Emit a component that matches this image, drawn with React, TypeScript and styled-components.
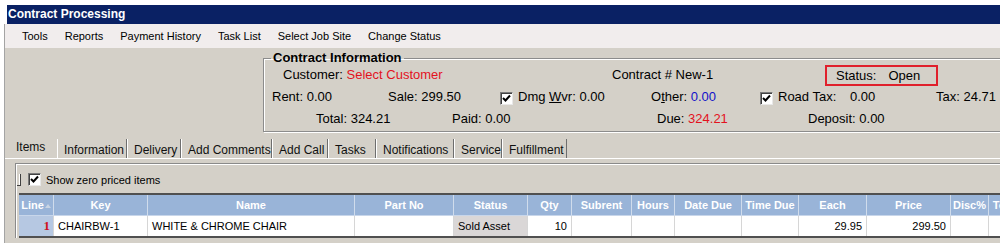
import React from "react";
import styled, { createGlobalStyle } from "styled-components";

const GlobalStyle = createGlobalStyle`
  html, body {
    margin: 0;
    padding: 0;
    background: #ffffff;
  }
  body {
    font-family: "Liberation Sans", Arial, sans-serif;
    color: #000;
  }
`;

const menuItems = [
  "Tools",
  "Reports",
  "Payment History",
  "Task List",
  "Select Job Site",
  "Change Status",
];

const tabs = [
  { name: "Items", w: 47 },
  { name: "Information", w: 70 },
  { name: "Delivery", w: 54 },
  { name: "Add Comments", w: 91 },
  { name: "Add Call", w: 56 },
  { name: "Tasks", w: 48 },
  { name: "Notifications", w: 78 },
  { name: "Service", w: 48 },
  { name: "Fulfillment", w: 65 },
];

interface Column {
  name: string;
  w: number;
}

const columns: Column[] = [
  { name: "Line", w: 35 },
  { name: "Key", w: 94 },
  { name: "Name", w: 207 },
  { name: "Part No", w: 99 },
  { name: "Status", w: 74 },
  { name: "Qty", w: 44 },
  { name: "Subrent", w: 60 },
  { name: "Hours", w: 43 },
  { name: "Date Due", w: 67 },
  { name: "Time Due", w: 57 },
  { name: "Each", w: 68 },
  { name: "Price", w: 84 },
  { name: "Disc%", w: 38 },
  { name: "Total", w: 34 },
];

const gridTemplate = columns.map((c) => `${c.w}px`).join(" ");

function CheckBox() {
  return (
    <CheckBoxBox>
      <svg width="9" height="9" viewBox="0 0 9 9">
        <path d="M1 4 L3.5 6.5 L8 1.5" stroke="#000" strokeWidth="2" fill="none" />
      </svg>
    </CheckBoxBox>
  );
}

export default function App() {
  return (
    <Page>
      <GlobalStyle />
      <TitleBar>Contract Processing</TitleBar>
      <Frame>
        <MenuBar>
          {menuItems.map((item) => (
            <MenuItem key={item}>{item}</MenuItem>
          ))}
        </MenuBar>

        <HeaderArea>
          <GroupBox>
            <Legend>Contract Information</Legend>
            <InfoRow $pad={19}>
              <Field $w={329}>
                Customer: <Red>Select Customer</Red>
              </Field>
              <Field $w={213}>Contract # New-1</Field>
              <StatusBox>
                <span>Status:</span>
                <span>Open</span>
              </StatusBox>
            </InfoRow>
            <InfoRow $pad={8}>
              <Field $w={116}>Rent: 0.00</Field>
              <Field $w={112}>Sale: 299.50</Field>
              <Field $w={151}>
                <CheckBox />
                Dmg <u>W</u>vr: 0.00
              </Field>
              <Field $w={109}>
                O<u>t</u>her: <Blue>0.00</Blue>
              </Field>
              <Field $w={90}>
                <CheckBox />
                Road Tax:
              </Field>
              <Field $w={86}>0.00</Field>
              <Field $w={70}>Tax: 24.71</Field>
            </InfoRow>
            <InfoRow $pad={52}>
              <Field $w={136}>Total: 324.21</Field>
              <Field $w={205}>Paid: 0.00</Field>
              <Field $w={151}>
                Due: <Red>324.21</Red>
              </Field>
              <Field $w={100}>Deposit: 0.00</Field>
            </InfoRow>
          </GroupBox>
        </HeaderArea>

        <TabStrip>
          {tabs.map((t, i) => (
            <Tab key={t.name} $w={t.w} $active={i === 0}>
              {t.name}
            </Tab>
          ))}
        </TabStrip>

        <TabPage>
          <ItemsPanel>
            <OptionsRow>
              <Grip />
              <CheckBox />
              <span>Show zero priced items</span>
            </OptionsRow>
            <GridWrap>
              <GridRow>
                {columns.map((c) => (
                  <HeadCell key={c.name}>
                    {c.name}
                    {c.name === "Line" && <SortArrow />}
                  </HeadCell>
                ))}
              </GridRow>
              <GridRow>
                <LineCell>1</LineCell>
                <Cell>CHAIRBW-1</Cell>
                <Cell>WHITE &amp; CHROME CHAIR</Cell>
                <Cell />
                <Cell $shade>Sold Asset</Cell>
                <Cell $right>10</Cell>
                <Cell />
                <Cell />
                <Cell />
                <Cell />
                <Cell $right>29.95</Cell>
                <Cell $right>299.50</Cell>
                <Cell />
                <Cell />
              </GridRow>
            </GridWrap>
          </ItemsPanel>
        </TabPage>
      </Frame>
    </Page>
  );
}

const Page = styled.div`
  padding: 5px 0 0 4px;
  width: 997px;
  height: 238px;
  overflow: hidden;
`;

const TitleBar = styled.div`
  margin-left: 3px;
  width: 993px;
  height: 19px;
  background: #0a2164;
  color: #ffffff;
  font-weight: bold;
  font-size: 12px;
  line-height: 19px;
  padding-left: 1px;
  box-sizing: border-box;
  white-space: nowrap;
`;

const Frame = styled.div`
  width: 996px;
  height: 219px;
  border-left: 1px solid #a4a4a4;
  box-sizing: border-box;
  display: flex;
  flex-direction: column;
  background: #d4d0c8;
  overflow: hidden;
`;

const MenuBar = styled.div`
  height: 24px;
  flex-shrink: 0;
  background: #f1eded;
  display: flex;
  align-items: center;
  gap: 17px;
  padding-left: 17px;
  font-size: 11px;
`;

const MenuItem = styled.span`
  white-space: nowrap;
  cursor: default;
`;

const HeaderArea = styled.div`
  height: 84px;
  flex-shrink: 0;
  padding: 4px 0 0 258px;
  box-sizing: border-box;
`;

const GroupBox = styled.fieldset`
  margin: 0;
  padding: 0;
  width: 737px;
  height: 80px;
  box-sizing: border-box;
  border: 1px solid #8c8c8c;
  box-shadow: inset 1px 1px 0 #ffffff, 1px 1px 0 #ffffff;
  font-size: 13px;
`;

const Legend = styled.legend`
  margin-left: 7px;
  padding: 0 2px;
  font-weight: bold;
  font-size: 13px;
  line-height: 12px;
`;

const InfoRow = styled.div<{ $pad: number }>`
  display: flex;
  align-items: center;
  height: 22px;
  padding-left: ${({ $pad }) => $pad}px;
`;

const Field = styled.div<{ $w: number }>`
  width: ${({ $w }) => $w}px;
  flex-shrink: 0;
  white-space: nowrap;
  line-height: 16px;
`;

const Red = styled.span`
  color: #e3121e;
`;

const Blue = styled.span`
  color: #1212c8;
`;

const StatusBox = styled.div`
  width: 113px;
  height: 21px;
  box-sizing: border-box;
  border: 2px solid #e0202c;
  display: flex;
  align-items: center;
  gap: 12px;
  padding-left: 9px;
`;

const CheckBoxBox = styled.span`
  width: 13px;
  height: 13px;
  box-sizing: border-box;
  background: #ffffff;
  border-top: 1px solid #7a7a7a;
  border-left: 1px solid #7a7a7a;
  border-right: 1px solid #e8e8e8;
  border-bottom: 1px solid #e8e8e8;
  box-shadow: inset 1px 1px 0 #404040;
  display: inline-flex;
  align-items: center;
  justify-content: center;
  vertical-align: -2px;
  margin-right: 5px;
  flex-shrink: 0;
`;

const TabStrip = styled.div`
  height: 26px;
  flex-shrink: 0;
  display: flex;
  align-items: flex-end;
  padding-left: 5px;
  font-size: 12px;
`;

const Tab = styled.div<{ $w: number; $active: boolean }>`
  width: ${({ $w }) => $w}px;
  box-sizing: border-box;
  white-space: nowrap;
  height: ${({ $active }) => ($active ? 24 : 19)}px;
  padding-left: ${({ $active }) => ($active ? 5 : 6)}px;
  padding-top: ${({ $active }) => ($active ? 3 : 0)}px;
  line-height: ${({ $active }) => ($active ? 20 : 23)}px;
  color: #101010;
  border-left: 1px solid ${({ $active }) => ($active ? "#d4d0c8" : "#ffffff")};
  border-right: 1px solid ${({ $active }) => ($active ? "#d4d0c8" : "#6e6e6e")};
`;

const TabPage = styled.div`
  flex: 1;
  border-top: 1px solid #ffffff;
  padding: 4px 0 0 10px;
`;

const ItemsPanel = styled.div`
  border-top: 1px solid #8a8a8a;
  border-left: 1px solid #8a8a8a;
  box-shadow: inset 1px 1px 0 #ffffff;
  padding-left: 3px;
`;

const OptionsRow = styled.div`
  height: 29px;
  display: flex;
  align-items: center;
  font-size: 11px;
  padding-top: 2px;
  box-sizing: border-box;
`;

const Grip = styled.span`
  width: 3px;
  height: 11px;
  border-right: 1px solid #404040;
  border-bottom: 1px solid #404040;
  margin: 0 7px 0 -2px;
  box-shadow: inset -1px 0 0 #ffffff;
`;

const GridWrap = styled.div`
  border-top: 2px solid #505050;
  border-bottom: 2px solid #505050;
  overflow: hidden;
`;

const GridRow = styled.div`
  display: grid;
  grid-template-columns: ${gridTemplate};
  font-size: 11px;
`;

const HeadCell = styled.div`
  height: 20px;
  line-height: 20px;
  background: #99b4d8;
  color: #ffffff;
  font-weight: bold;
  text-align: center;
  border-right: 1px solid #d0dcec;
  border-bottom: 1px solid #c8d6ea;
  white-space: nowrap;
  overflow: hidden;
`;

const SortArrow = styled.span`
  display: inline-block;
  width: 0;
  height: 0;
  border-left: 3px solid transparent;
  border-right: 3px solid transparent;
  border-bottom: 4px solid #c8d4e4;
  margin-left: 1px;
  vertical-align: 1px;
`;

const Cell = styled.div<{ $right?: boolean; $shade?: boolean }>`
  height: 20px;
  line-height: 20px;
  background: ${({ $shade }) => ($shade ? "#dad7d7" : "#ffffff")};
  border-right: 1px solid #d6d6d6;
  padding: 0 4px;
  text-align: ${({ $right }) => ($right ? "right" : "left")};
  white-space: nowrap;
  overflow: hidden;
`;

const LineCell = styled.div`
  height: 20px;
  line-height: 20px;
  background: #b6c8e2;
  border-right: 1px solid #d6d6d6;
  padding-right: 3px;
  text-align: right;
  color: #d0101c;
  font-family: "Liberation Serif", "Times New Roman", serif;
  font-weight: bold;
  font-size: 13px;
`;
